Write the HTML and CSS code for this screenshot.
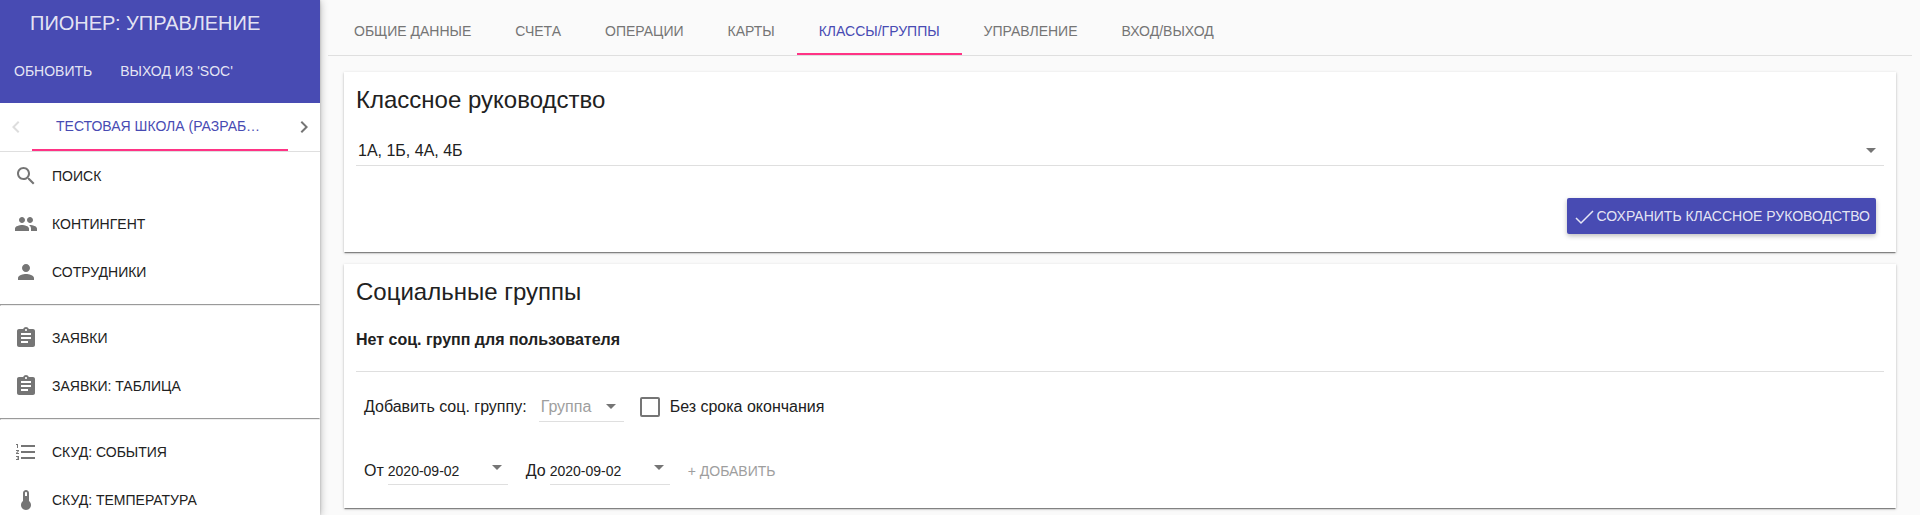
FILE: index.html
```
<!DOCTYPE html>
<html lang="ru">

<head>
    <meta charset="UTF-8">
    <meta name="viewport" content="width=device-width, initial-scale=1.0">
    <title>Пионер: управление</title>
    <link rel="stylesheet" href="styles.css">
</head>

<body>
    <aside class="sidebar">
        <header class="toolbar">
            <h1 class="toolbar-title">ПИОНЕР: УПРАВЛЕНИЕ</h1>
            <div class="toolbar-actions">
                <button type="button" class="toolbar-button">ОБНОВИТЬ</button>
                <button type="button" class="toolbar-button">ВЫХОД ИЗ 'SOC'</button>
            </div>
        </header>

        <div class="school-tabs">
            <button type="button" class="pager" aria-label="Назад" disabled>
                <svg viewBox="0 0 24 24"><path d="M15.41 7.41L14 6l-6 6 6 6 1.41-1.41L10.83 12z"/></svg>
            </button>
            <button type="button" class="school-tab">ТЕСТОВАЯ ШКОЛА (РАЗРАБОТКА)</button>
            <button type="button" class="pager" aria-label="Вперёд">
                <svg viewBox="0 0 24 24"><path d="M10 6L8.59 7.41 13.17 12l-4.58 4.59L10 18l6-6z"/></svg>
            </button>
        </div>

        <nav class="menu">
            <a href="#" class="menu-item">
                <svg viewBox="0 0 24 24"><path d="M15.5 14h-.79l-.28-.27C15.41 12.59 16 11.11 16 9.5 16 5.91 13.09 3 9.5 3S3 5.91 3 9.5 5.91 16 9.5 16c1.61 0 3.09-.59 4.23-1.57l.27.28v.79l5 4.99L20.49 19l-4.99-5zm-6 0C7.01 14 5 11.99 5 9.5S7.01 5 9.5 5 14 7.01 14 9.5 11.99 14 9.5 14z"/></svg>
                ПОИСК
            </a>
            <a href="#" class="menu-item">
                <svg viewBox="0 0 24 24"><path d="M16 11c1.66 0 2.99-1.34 2.99-3S17.66 5 16 5s-3 1.34-3 3 1.34 3 3 3zm-8 0c1.66 0 2.99-1.34 2.99-3S9.66 5 8 5 5 6.34 5 8s1.34 3 3 3zm0 2c-2.33 0-7 1.17-7 3.5V19h14v-2.5c0-2.33-4.67-3.5-7-3.5zm8 0c-.29 0-.62.02-.97.05 1.16.84 1.97 1.97 1.97 3.45V19h6v-2.5c0-2.33-4.67-3.5-7-3.5z"/></svg>
                КОНТИНГЕНТ
            </a>
            <a href="#" class="menu-item">
                <svg viewBox="0 0 24 24"><path d="M12 12c2.21 0 4-1.79 4-4s-1.79-4-4-4-4 1.79-4 4 1.79 4 4 4zm0 2c-2.67 0-8 1.34-8 4v2h16v-2c0-2.66-5.33-4-8-4z"/></svg>
                СОТРУДНИКИ
            </a>
            <hr>
            <a href="#" class="menu-item">
                <svg viewBox="0 0 24 24"><path d="M19 3h-4.18C14.4 1.84 13.3 1 12 1s-2.4.84-2.82 2H5c-1.1 0-2 .9-2 2v14c0 1.1.9 2 2 2h14c1.1 0 2-.9 2-2V5c0-1.1-.9-2-2-2zm-7 0c.55 0 1 .45 1 1s-.45 1-1 1-1-.45-1-1 .45-1 1-1zm2 14H7v-2h7v2zm3-4H7v-2h10v2zm0-4H7V7h10v2z"/></svg>
                ЗАЯВКИ
            </a>
            <a href="#" class="menu-item">
                <svg viewBox="0 0 24 24"><path d="M19 3h-4.18C14.4 1.84 13.3 1 12 1s-2.4.84-2.82 2H5c-1.1 0-2 .9-2 2v14c0 1.1.9 2 2 2h14c1.1 0 2-.9 2-2V5c0-1.1-.9-2-2-2zm-7 0c.55 0 1 .45 1 1s-.45 1-1 1-1-.45-1-1 .45-1 1-1zm2 14H7v-2h7v2zm3-4H7v-2h10v2zm0-4H7V7h10v2z"/></svg>
                ЗАЯВКИ: ТАБЛИЦА
            </a>
            <hr>
            <a href="#" class="menu-item">
                <svg viewBox="0 0 24 24"><path d="M2 17h2v.5H3v1h1v.5H2v1h3v-4H2v1zm1-9h1V4H2v1h1v3zm-1 3h1.8L2 13.1v.9h3v-1H3.2L5 10.9V10H2v1zm5-6v2h14V5H7zm0 14h14v-2H7v2zm0-6h14v-2H7v2z"/></svg>
                СКУД: СОБЫТИЯ
            </a>
            <a href="#" class="menu-item">
                <svg viewBox="0 0 24 24"><path fill-rule="evenodd" d="M15 13V5c0-1.66-1.34-3-3-3S9 3.34 9 5v8c-1.21.91-2 2.37-2 4 0 2.76 2.24 5 5 5s5-2.24 5-5c0-1.63-.79-3.09-2-4zm-4-8c0-.55.45-1 1-1s1 .45 1 1v3h-2V5z"/></svg>
                СКУД: ТЕМПЕРАТУРА
            </a>
        </nav>
    </aside>

    <main class="content">
        <nav class="tabs">
            <a href="#" class="tab">ОБЩИЕ ДАННЫЕ</a>
            <a href="#" class="tab">СЧЕТА</a>
            <a href="#" class="tab">ОПЕРАЦИИ</a>
            <a href="#" class="tab">КАРТЫ</a>
            <a href="#" class="tab active">КЛАССЫ/ГРУППЫ</a>
            <a href="#" class="tab">УПРАВЛЕНИЕ</a>
            <a href="#" class="tab">ВХОД/ВЫХОД</a>
        </nav>

        <section class="card">
            <h2>Классное руководство</h2>
            <select class="select classes" aria-label="Классы">
                <option>1А, 1Б, 4А, 4Б</option>
            </select>
            <button type="button" class="save-button">
                <svg viewBox="0 0 20 20"><path d="M1 12l5 5L18 5"/></svg>
                СОХРАНИТЬ КЛАССНОЕ РУКОВОДСТВО
            </button>
        </section>

        <section class="card groups">
            <h2>Социальные группы</h2>
            <p class="empty">Нет соц. групп для пользователя</p>
            <form>
                <div class="row">
                    <label for="group">Добавить соц. группу:</label>
                    <select id="group" class="select group">
                        <option>Группа</option>
                    </select>
                    <label class="endless">
                        <input type="checkbox" class="checkbox">
                        Без срока окончания
                    </label>
                </div>
                <div class="row dates">
                    <label for="from">От</label>
                    <div class="date">
                        <input type="text" id="from" value="2020-09-02">
                        <button type="button" class="date-toggle" aria-label="Открыть календарь"></button>
                    </div>
                    <label for="to">До</label>
                    <div class="date">
                        <input type="text" id="to" value="2020-09-02">
                        <button type="button" class="date-toggle" aria-label="Открыть календарь"></button>
                    </div>
                    <button type="submit" class="add-button" disabled>+ ДОБАВИТЬ</button>
                </div>
            </form>
        </section>
    </main>
</body>

</html>
```
FILE: styles.css
```
:root {
    --primary: #484bb3;
    --accent: #ff3385;
    --text: #212121;
    --muted: #757575;
    --line: #dfdfdf;
    --bg: #fafafa;
}

* {
    box-sizing: border-box;
}

body {
    margin: 0;
    height: 100vh;
    display: flex;
    overflow: hidden;
    background: var(--bg);
    color: var(--text);
    font-family: "Liberation Sans", Arial, sans-serif;
    font-size: 16px;
}

button,
input,
select {
    font-family: inherit;
    color: inherit;
    background: none;
    border: none;
    padding: 0;
    margin: 0;
}

button {
    font-size: 14px;
    cursor: pointer;
}

a {
    color: inherit;
    text-decoration: none;
}

svg {
    fill: currentColor;
    flex: none;
}

.sidebar {
    flex: none;
    width: 320px;
    background: #fff;
    overflow: hidden;
    box-shadow: 0 1px 8px rgba(0, 0, 0, 0.3), 0 0 2px rgba(0, 0, 0, 0.2);
    z-index: 1;
}

.toolbar {
    height: 103px;
    background: var(--primary);
    color: rgba(255, 255, 255, 0.87);
}

.toolbar-title {
    margin: 0;
    padding: 0 30px;
    font-size: 20px;
    font-weight: normal;
    line-height: 46px;
}

.toolbar-actions {
    display: flex;
    gap: 28px;
    padding: 0 14px;
}

.toolbar-button {
    line-height: 50px;
}

.school-tabs {
    display: flex;
    height: 49px;
    border-bottom: 1px solid var(--line);
}

.school-tab {
    flex: 1;
    min-width: 0;
    padding: 0 24px;
    line-height: 46px;
    color: var(--primary);
    border-bottom: 2px solid var(--accent);
    overflow: hidden;
    white-space: nowrap;
    text-overflow: ellipsis;
}

.pager {
    width: 32px;
    display: flex;
    align-items: center;
    justify-content: center;
    color: var(--muted);
}

.pager:disabled {
    color: #ddd;
}

.pager svg {
    width: 24px;
    height: 24px;
}

.menu hr {
    margin: 8px 0;
}

.menu-item {
    display: flex;
    align-items: center;
    gap: 14px;
    height: 48px;
    padding: 0 14px;
    font-size: 14px;
}

.menu-item svg {
    width: 24px;
    height: 24px;
    color: var(--muted);
}

.content {
    flex: 1;
    min-width: 0;
    padding: 8px;
}

.tabs {
    display: flex;
    height: 48px;
    margin-bottom: 16px;
    padding-left: 4px;
    border-bottom: 1px solid var(--line);
}

.tab {
    padding: 0 22px;
    line-height: 46px;
    font-size: 14px;
    color: var(--muted);
}

.tab.active {
    color: var(--primary);
    border-bottom: 2px solid var(--accent);
}

.card {
    display: flex;
    flex-direction: column;
    margin: 0 16px 12px;
    padding: 12px 12px 18px;
    background: #fff;
    box-shadow: 0 1px 3px rgba(0, 0, 0, 0.2), 0 1px 1px rgba(0, 0, 0, 0.14), 0 2px 1px -1px rgba(0, 0, 0, 0.3);
}

.card h2 {
    margin: 0;
    font-size: 24px;
    font-weight: normal;
    line-height: 32px;
}

.select {
    appearance: none;
    height: 30px;
    padding: 0 2px;
    font-size: 16px;
    border-bottom: 1px solid var(--line);
    background: url("data:image/svg+xml,%3Csvg xmlns='http://www.w3.org/2000/svg' width='10' height='5'%3E%3Cpath d='M0 0h10L5 5z' fill='%23757575'/%3E%3C/svg%3E") no-repeat right 8px center;
}

.classes {
    margin: 20px 0 32px;
}

.save-button {
    align-self: flex-end;
    display: flex;
    align-items: center;
    height: 36px;
    margin-right: 8px;
    padding: 0 6px 0 8px;
    gap: 2px;
    background: var(--primary);
    color: rgba(255, 255, 255, 0.87);
    border-radius: 2px;
    box-shadow: 0 2px 5px rgba(0, 0, 0, 0.26);
}

.save-button svg {
    width: 20px;
    height: 20px;
    fill: none;
    stroke: currentColor;
    stroke-width: 1.5;
}

.groups {
    padding-bottom: 16px;
}

.empty {
    margin: 0 0 14px;
    padding: 20px 0;
    border-bottom: 1px solid var(--line);
    font-weight: bold;
    line-height: 23px;
}

.row {
    display: flex;
    align-items: center;
    height: 42px;
    padding-left: 8px;
}

.group {
    width: 85px;
    margin: 0 16px 0 12px;
    color: #9e9e9e;
}

.endless {
    display: flex;
    align-items: center;
    gap: 10px;
}

.checkbox {
    appearance: none;
    width: 20px;
    height: 20px;
    border: 2px solid var(--muted);
    border-radius: 2px;
}

.checkbox:checked {
    background: var(--accent);
}

.dates {
    margin-top: 22px;
}

.date {
    display: flex;
    align-items: center;
    width: 120px;
    height: 28px;
    margin: 0 18px 0 4px;
    border-bottom: 1px solid var(--line);
}

.date input {
    flex: 1;
    min-width: 0;
    font-size: 14px;
}

.date-toggle {
    width: 16px;
    height: 16px;
}

.date-toggle::before {
    content: "";
    display: block;
    width: 0;
    margin-bottom: 6px;
    border: 5px solid transparent;
    border-top-color: var(--muted);
    border-bottom: none;
}

.add-button:disabled {
    color: #9e9e9e;
    cursor: default;
}
```
